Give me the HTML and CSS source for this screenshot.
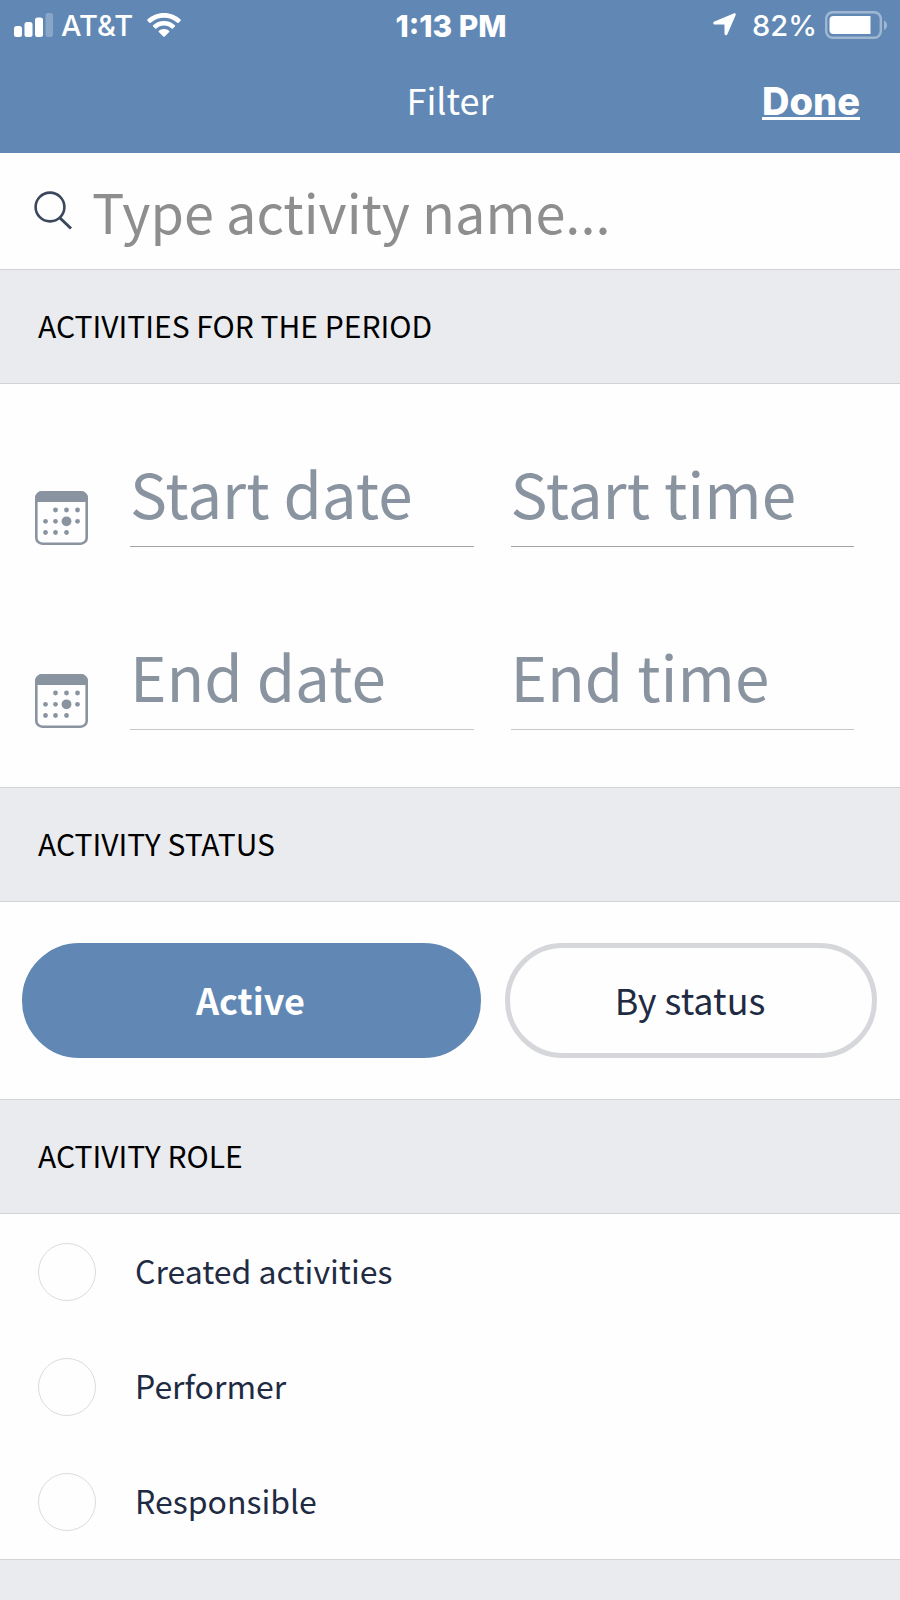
FILE: index.html
```html
<!DOCTYPE html>
<html lang="en">
<head>
<meta charset="utf-8">
<meta name="viewport" content="width=device-width, initial-scale=1">
<title>Filter</title>
<link rel="stylesheet" href="styles.css">
</head>
<body>
<header class="top">
  <div class="status">
    <div class="status-left">
      <svg class="signal" width="39" height="24" viewBox="0 0 39 24" aria-hidden="true">
        <rect x="0" y="13" width="8" height="11" rx="2.5"/>
        <rect x="10.500" y="9" width="8" height="15" rx="2.5"/>
        <rect x="21" y="4.500" width="8" height="19.500" rx="2.5"/>
        <rect x="31.500" y="0" width="7.500" height="24" rx="2.5" opacity=".25"/>
      </svg>
      <span class="carrier">AT&amp;T</span>
      <svg class="wifi" width="34" height="24" viewBox="0 0 34 24" aria-hidden="true">
        <path d="M17 0C10.500 0 4.700 2.500.4 6.500c-.4.4-.4.9 0 1.300l2 2c.4.400.9.400 1.300 0C7.200 6.500 11.900 4.700 17 4.700s9.800 1.800 13.300 5.100c.4.400.9.400 1.300 0l2-2c.4-.4.4-.9 0-1.300C29.300 2.500 23.500 0 17 0z"/>
        <path d="M17 8c-4.200 0-8 1.600-10.900 4.200-.4.4-.4.900 0 1.300l2 2c.4.400.9.400 1.300 0 2.100-1.800 4.700-2.900 7.600-2.900s5.500 1.100 7.600 2.900c.4.400.9.400 1.300 0l2-2c.4-.4.4-.9 0-1.300C25 9.600 21.200 8 17 8z"/>
        <path d="M17 16c-2 0-3.800.7-5.200 1.900-.4.4-.4.800 0 1.200l4.500 4.500c.4.400 1 .4 1.400 0l4.500-4.500c.4-.4.4-.8 0-1.200C20.800 16.700 19 16 17 16z"/>
      </svg>
    </div>
    <time class="clock">1:13 PM</time>
    <div class="status-right">
      <svg class="locate" width="23" height="23" viewBox="0 0 23 23" aria-hidden="true">
        <path d="M20.600.4C22.100-.3 23.200.8 22.600 2.300L14.500 20.900c-.8 1.900-3 1.500-3-.5V12.300c0-.5-.2-.7-.7-.7H2C-.2 11.600-.5 9.200 1.500 8.400z"/>
      </svg>
      <span class="percent">82%</span>
      <svg class="battery" width="63" height="28" viewBox="0 0 63 28" aria-hidden="true">
        <rect x="1.200" y="1.200" width="54.600" height="25.600" rx="6.500" fill="none" stroke="#fff" stroke-opacity=".4" stroke-width="2.400"/>
        <path d="M45.500 5H8.500A4 4 0 0 0 4.500 9v10a4 4 0 0 0 4 4h37z"/>
        <path d="M59 9.500c4 1.500 4 8 0 9.500z" opacity=".4"/>
      </svg>
    </div>
  </div>
  <nav class="nav">
    <h1 class="title">Filter</h1>
    <a class="done" href="#done">Done</a>
  </nav>
</header>
<main>
  <label class="search">
    <svg class="glass" width="40" height="40" viewBox="0 0 40 40" fill="none" stroke="#3b475c" stroke-width="2.600" aria-hidden="true">
      <circle cx="16" cy="16" r="14.400"/><path d="M26 27l11 10.500" stroke-width="3"/>
    </svg>
    <input class="search-input" type="text" placeholder="Type activity name..." aria-label="Activity name">
  </label>

  <h2 class="section">ACTIVITIES FOR THE PERIOD</h2>
  <div class="period">
    <div class="dates">
      <svg class="calendar" width="53" height="54" viewBox="0 0 53 54" aria-hidden="true">
        <rect x="1.300" y="1.300" width="50.400" height="51.400" rx="6" fill="none" stroke="#8a94a1" stroke-width="2.600"/>
        <path d="M0 11V7a7 7 0 0 1 7-7h39a7 7 0 0 1 7 7v4z"/>
        <circle cx="20.500" cy="19" r="2.400"/><circle cx="31.500" cy="19" r="2.400"/><circle cx="42.500" cy="19" r="2.400"/>
        <circle cx="10.500" cy="30.300" r="2.400"/><circle cx="20.500" cy="30.300" r="2.400"/><circle cx="31.500" cy="30.300" r="4.900"/><circle cx="42.500" cy="30.300" r="2.400"/>
        <circle cx="10.500" cy="41.500" r="2.400"/><circle cx="20.500" cy="41.500" r="2.400"/><circle cx="31.500" cy="41.500" r="2.400"/>
      </svg>
      <input class="field" type="text" placeholder="Start date" aria-label="Start date">
      <input class="field" type="text" placeholder="Start time" aria-label="Start time">
    </div>
    <div class="dates">
      <svg class="calendar" width="53" height="54" viewBox="0 0 53 54" aria-hidden="true">
        <rect x="1.300" y="1.300" width="50.400" height="51.400" rx="6" fill="none" stroke="#8a94a1" stroke-width="2.600"/>
        <path d="M0 11V7a7 7 0 0 1 7-7h39a7 7 0 0 1 7 7v4z"/>
        <circle cx="20.500" cy="19" r="2.400"/><circle cx="31.500" cy="19" r="2.400"/><circle cx="42.500" cy="19" r="2.400"/>
        <circle cx="10.500" cy="30.300" r="2.400"/><circle cx="20.500" cy="30.300" r="2.400"/><circle cx="31.500" cy="30.300" r="4.900"/><circle cx="42.500" cy="30.300" r="2.400"/>
        <circle cx="10.500" cy="41.500" r="2.400"/><circle cx="20.500" cy="41.500" r="2.400"/><circle cx="31.500" cy="41.500" r="2.400"/>
      </svg>
      <input class="field field-light" type="text" placeholder="End date" aria-label="End date">
      <input class="field field-light" type="text" placeholder="End time" aria-label="End time">
    </div>
  </div>

  <h2 class="section">ACTIVITY STATUS</h2>
  <div class="pills">
    <button class="pill pill-on" type="button">Active</button>
    <button class="pill" type="button">By status</button>
  </div>

  <h2 class="section">ACTIVITY ROLE</h2>
  <div class="roles">
    <label class="role"><input class="dot" type="checkbox"><span class="role-name">Created activities</span></label>
    <label class="role"><input class="dot" type="checkbox"><span class="role-name">Performer</span></label>
    <label class="role"><input class="dot" type="checkbox"><span class="role-name">Responsible</span></label>
  </div>
  <div class="tail"></div>
</main>
</body>
</html>
```
FILE: styles.css
```css
* { box-sizing: border-box; }

body {
  margin: 0;
  min-height: 100vh;
  display: flex;
  flex-direction: column;
  background: #fefefe;
  color: #1f2b43;
  font-family: "Noto Sans CJK SC", "Open Sans", sans-serif;
}

main {
  flex: 1;
  display: flex;
  flex-direction: column;
}

.top {
  background: #6188b4;
  color: #fff;
}

.top svg { fill: #fff; }

.status {
  height: 49px;
  padding: 0 12px 0 14px;
  display: grid;
  grid-template-columns: 1fr auto 1fr;
  align-items: center;
  font: 500 29px/36px Inter, sans-serif;
}

.status-left,
.status-right {
  display: flex;
  align-items: center;
  gap: 8px;
}

.carrier,
.percent,
.clock { padding-top: 2px; }

.status-right { justify-content: flex-end; }
.wifi { margin-left: 6px; }
.locate { margin-right: 8px; }

.clock {
  font-size: 30px;
  font-weight: 800;
}

.nav {
  height: 104px;
  padding: 0 40px 4px;
  display: grid;
  grid-template-columns: 1fr auto 1fr;
  align-items: center;
}

.title {
  grid-column: 2;
  margin: 0;
  font-size: 36px;
  line-height: 48px;
  font-weight: 400;
}

.done {
  justify-self: end;
  padding-top: 4px;
  color: #fff;
  font: 800 38px/48px Inter, sans-serif;
  text-decoration-thickness: 3px;
  text-underline-offset: 2px;
  text-decoration-skip-ink: none;
}

.search {
  height: 116px;
  padding: 0 34px;
  display: flex;
  align-items: center;
  gap: 18px;
}

.glass { flex: none; }

.search-input,
.field {
  min-width: 0;
  padding: 0;
  border: 0;
  outline: 0;
  background: transparent;
  color: #1f2b43;
  font-family: inherit;
}

.search-input {
  flex: 1;
  height: 80px;
  padding-bottom: 2px;
  font-size: 54px;
}

.search-input::placeholder { color: #8e8e8e; opacity: 1; }

.section {
  height: 115px;
  margin: 0;
  padding: 0 38px 4px;
  display: flex;
  align-items: center;
  border: solid #d2d3d6;
  border-width: 1px 0;
  background: #eaebef;
  color: #000;
  font-size: 30px;
  font-weight: 400;
}

.period {
  height: 403px;
  padding: 73px 46px 57px 35px;
  display: flex;
  flex-direction: column;
  justify-content: space-between;
}

.dates {
  display: grid;
  grid-template-columns: 58px 1fr 1fr;
  column-gap: 37px;
  align-items: end;
}

.calendar {
  margin-bottom: 2px;
  fill: #8a94a1;
}

.field {
  height: 90px;
  padding-bottom: 20px;
  border-bottom: 1px solid #a2a4a8;
  font-size: 62px;
  line-height: 69px;
}

.field-light { border-color: #c6c8ca; }
.field::placeholder { color: #8a94a1; opacity: 1; }

.pills {
  height: 197px;
  padding: 0 23px 0 22px;
  display: grid;
  grid-template-columns: 459fr 372fr;
  align-items: center;
  gap: 24px;
}

.pill {
  height: 115px;
  padding: 0 2px 4px 0;
  border: 5px solid #d5d7db;
  border-radius: 58px;
  background: #fefefe;
  color: #1f2b43;
  font: 400 36px/48px "Noto Sans CJK SC", "Open Sans", sans-serif;
}

.pill-on {
  border-color: #6188b4;
  background: #6188b4;
  color: #fff;
  font-weight: 700;
}

.role {
  height: 115px;
  padding: 0 38px;
  display: flex;
  align-items: center;
  gap: 39px;
  font-size: 32px;
}

.role-name { padding-bottom: 4px; }

.dot {
  appearance: none;
  width: 58px;
  height: 58px;
  margin: 0;
  border: 1px solid #dcdcde;
  border-radius: 50%;
}

.dot:checked { background: #6188b4; }

.tail {
  flex: 1;
  min-height: 41px;
  border-top: 1px solid #d2d3d6;
  background: #eaebef;
}
```
